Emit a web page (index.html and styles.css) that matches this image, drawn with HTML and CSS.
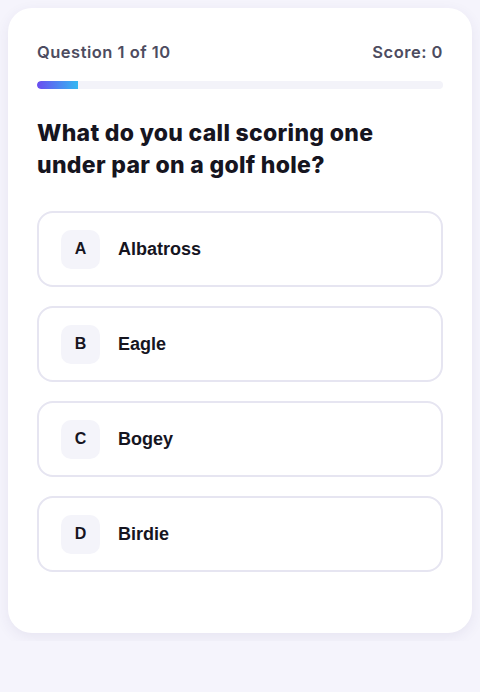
FILE: index.html
```html
<!DOCTYPE html>
<html lang="en">
<head>
    <meta charset="UTF-8">
    <meta name="viewport" content="width=device-width, initial-scale=1.0">
    <title>Golf Quiz</title>
    <link rel="stylesheet" href="styles.css">
</head>
<body>

<div class="quiz-card">
    <div class="quiz-header">
        <span class="counter">Question 1 of 10</span>
        <span class="score">Score: 0</span>
    </div>

    <div class="progress">
        <div class="progress-fill" style="width: 10%"></div>
    </div>

    <h2 class="question">What do you call scoring one under par on a golf hole?</h2>

    <div class="options">
        <div class="option"><span class="letter">A</span><span class="answer">Albatross</span></div>
        <div class="option"><span class="letter">B</span><span class="answer">Eagle</span></div>
        <div class="option"><span class="letter">C</span><span class="answer">Bogey</span></div>
        <div class="option"><span class="letter">D</span><span class="answer">Birdie</span></div>
    </div>
</div>

</body>
</html>
```

FILE: styles.css
```css
body {
    margin: 0;
    padding: 8px;
    background-color: #f5f4fc;
    font-family: "Liberation Sans", Arial, sans-serif;
}
.quiz-card {
    background-color: white;
    border-radius: 24px;
    padding: 32px 29px 61px;
    box-shadow: 0 4px 14px rgba(60, 50, 120, 0.08);
}
.quiz-header {
    display: flex;
    justify-content: space-between;
    font-family: Inter, sans-serif;
    font-size: 16.5px;
    font-weight: 600;
    line-height: 24px;
    color: #4d4c60;
    letter-spacing: 0.5px;
}
.progress {
    height: 8px;
    margin-top: 17px;
    background-color: #f3f3f9;
    border-radius: 4px;
    overflow: hidden;
}
.progress-fill {
    height: 100%;
    background: linear-gradient(90deg, #6a4cf0, #34b8f2);
    border-radius: 4px 0 0 4px;
}
.question {
    margin: 28px 0 30px;
    font-family: Inter, sans-serif;
    font-size: 23px;
    font-weight: 800;
    line-height: 32px;
    color: #16151f;
    letter-spacing: 0.3px;
}
.options {
    display: flex;
    flex-direction: column;
    gap: 19px;
}
.option {
    display: flex;
    align-items: center;
    gap: 18px;
    height: 76px;
    box-sizing: border-box;
    padding: 0 22px;
    border: 2px solid #e6e5f1;
    border-radius: 16px;
}
.letter {
    display: flex;
    align-items: center;
    justify-content: center;
    width: 39px;
    height: 39px;
    border-radius: 10px;
    background-color: #f4f4fa;
    font-size: 16px;
    font-weight: bold;
    color: #16151f;
}
.answer {
    font-size: 18px;
    font-weight: bold;
    color: #16151f;
}
```
